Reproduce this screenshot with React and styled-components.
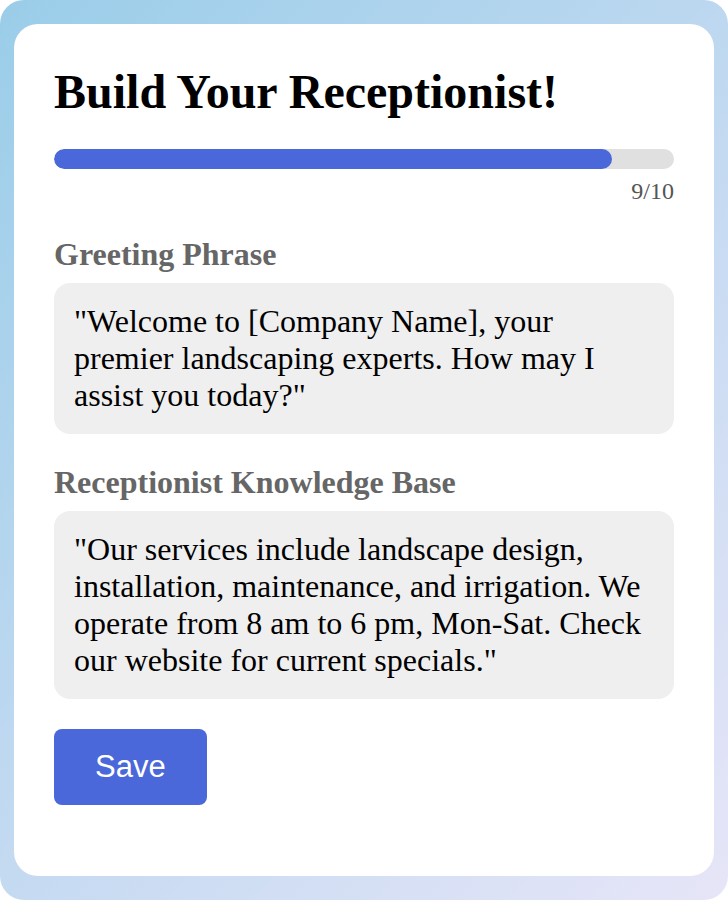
import styled, { createGlobalStyle } from 'styled-components';

const GlobalStyle = createGlobalStyle`
    body{
        margin:0;
        background:#fff;
        font-family:"Liberation Serif", "Times New Roman", serif;
    }
    *{ box-sizing:border-box; }
`

const Backdrop = styled.div`
    min-height:900px;
    padding:24px 14px;
    border-radius:24px;
    background:linear-gradient(135deg, #9acde9 0%, #e7e5f8 100%);
`
const Card = styled.div`
    min-height:852px;
    background:#fff;
    border-radius:24px;
    padding:40px;
    display:flex;
    flex-direction:column;
`
const Title = styled.h1`
    margin:0 0 30px;
    font-size:48px;
    font-weight:700;
    color:#000;
`
const Track = styled.div`
    height:20px;
    border-radius:10px;
    background:#e0e0e0;
    overflow:hidden;
`
const Fill = styled.div`
    height:100%;
    border-radius:10px;
    background:#4a68da;
`
const Counter = styled.div`
    margin-top:9px;
    text-align:right;
    font-size:24px;
    color:#555;
`
const Label = styled.h3`
    margin:${props => props.first ? '31px' : '30px'} 0 10px;
    font-size:32px;
    font-weight:700;
    color:#666;
`
const TextBox = styled.div`
    background:#efefef;
    border-radius:16px;
    padding:20px;
    font-size:32px;
    color:#000;
`
const Button = styled.button`
    align-self:flex-start;
    margin-top:30px;
    padding:20px 41px;
    border:none;
    border-radius:8px;
    background:#4a68da;
    color:#fff;
    font-family:"Liberation Sans", Arial, sans-serif;
    font-size:31px;
    cursor:pointer;
`

const steps = { current: 9, total: 10 }

const App = () => {
    return (
        <Backdrop>
            <GlobalStyle />
            <Card>
                <Title>Build Your Receptionist!</Title>
                <Track>
                    <Fill style={{ width: `${(steps.current / steps.total) * 100}%` }} />
                </Track>
                <Counter>{steps.current}/{steps.total}</Counter>
                <Label first>Greeting Phrase</Label>
                <TextBox>"Welcome to [Company Name], your premier landscaping experts. How may I assist you today?"</TextBox>
                <Label>Receptionist Knowledge Base</Label>
                <TextBox>"Our services include landscape design, installation, maintenance, and irrigation. We operate from 8 am to 6 pm, Mon-Sat. Check our website for current specials."</TextBox>
                <Button>Save</Button>
            </Card>
        </Backdrop>
    )
}

export default App
